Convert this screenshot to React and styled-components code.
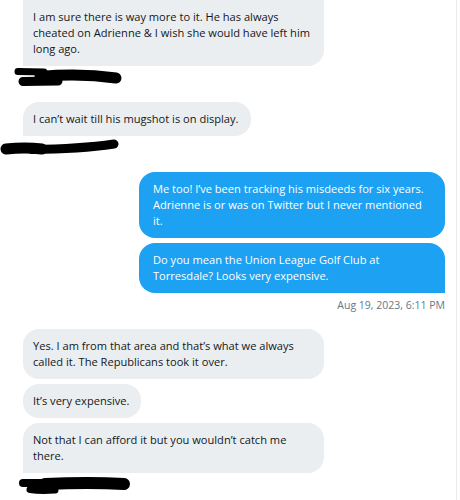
import React from 'react';
import styled, { createGlobalStyle } from 'styled-components';

const GlobalStyle = createGlobalStyle`
  html, body {
    margin: 0;
    padding: 0;
    background: #ffffff;
    overflow: hidden;
  }
`;

// Layout
const Thread = styled.div`
  width: 457px;
  height: 500px;
  box-sizing: border-box;
  border-right: 1px solid #e6ecf0;
  padding: 0 11px 0 23px;
  display: flex;
  flex-direction: column;
  gap: 16px;
  font-family: "Open Sans", "Noto Sans", sans-serif;
  font-size: 11.1px;
  line-height: 16px;
  overflow: hidden;
`;

const Group = styled.div`
  display: flex;
  flex-direction: column;
  align-items: ${({ $mine }) => ($mine ? 'flex-end' : 'flex-start')};
  gap: 5px;
`;

const Bubble = styled.div`
  box-sizing: border-box;
  width: ${({ $wide, $mine }) => ($wide ? ($mine ? '306px' : '301px') : 'auto')};
  padding: ${({ $mine }) => ($mine ? '9px 14px' : '9px 12px 9px 10px')};
  background: ${({ $mine }) => ($mine ? '#1da1f2' : '#eaeef1')};
  color: ${({ $mine }) => ($mine ? '#ffffff' : '#14171a')};
  border-radius: 16px;
  white-space: pre;
  ${({ $tail, $mine }) =>
    $tail && ($mine ? 'border-bottom-right-radius: 0;' : 'border-bottom-left-radius: 0;')}
  ${({ $cut }) => $cut && 'margin-top: -14px; padding-top: 23px;'}
`;

const Footer = styled.div`
  height: 16px;
  margin-top: -1px;
  display: flex;
  align-items: center;
  align-self: stretch;
  justify-content: ${({ $mine }) => ($mine ? 'flex-end' : 'flex-start')};
`;

const Stamp = styled.span`
  font-size: 10.5px;
  color: #657786;
`;

const Redaction = styled.svg`
  display: block;
  width: 160px;
  height: 18px;
  margin-left: -23px;
  overflow: visible;
`;

// Scribbles over the sender names
const scribbles = [
  (
    <g stroke="#000" strokeLinecap="round" fill="none">
      <path d="M18 2.5 L44 3" strokeWidth="7" />
      <path d="M23 12.5 L58 12" strokeWidth="9" />
      <path d="M40 7.5 Q80 4 116 9" strokeWidth="11" />
    </g>
  ),
  (
    <g stroke="#000" strokeLinecap="round" fill="none">
      <path d="M6 10 Q25 8 42 10" strokeWidth="11" />
      <path d="M32 10.5 Q80 10 114 5" strokeWidth="9" />
    </g>
  ),
  (
    <g stroke="#000" strokeLinecap="round" fill="none">
      <path d="M23 7 L45 7" strokeWidth="8" />
      <path d="M30 13.5 Q40 15 55 14" strokeWidth="7" />
      <path d="M45 8 Q90 6 124 8" strokeWidth="12" />
    </g>
  ),
];

const groups = [
  {
    mine: false,
    scribble: 0,
    messages: [
      'I am sure there is way more to it. He has always\ncheated on Adrienne & I wish she would have left him\nlong ago.',
    ],
  },
  {
    mine: false,
    scribble: 1,
    messages: ['I can’t wait till his mugshot is on display.'],
  },
  {
    mine: true,
    stamp: 'Aug 19, 2023, 6:11 PM',
    messages: [
      'Me too! I’ve been tracking his misdeeds for six years.\nAdrienne is or was on Twitter but I never mentioned\nit.',
      'Do you mean the Union League Golf Club at\nTorresdale? Looks very expensive.',
    ],
  },
  {
    mine: false,
    scribble: 2,
    messages: [
      'Yes. I am from that area and that’s what we always\ncalled it. The Republicans took it over.',
      'It’s very expensive.',
      'Not that I can afford it but you wouldn’t catch me\nthere.',
    ],
  },
];

function App() {
  return (
    <>
      <GlobalStyle />
      <Thread>
        {groups.map((group, gi) => (
          <Group key={gi} $mine={group.mine}>
            {group.messages.map((text, mi) => (
              <Bubble
                key={mi}
                $mine={group.mine}
                $wide={text.includes('\n')}
                $tail={mi === group.messages.length - 1}
                $cut={gi === 0 && mi === 0}
              >
                {text}
              </Bubble>
            ))}
            <Footer $mine={group.mine}>
              {group.mine ? (
                <Stamp>{group.stamp}</Stamp>
              ) : (
                <Redaction viewBox="0 0 160 18">{scribbles[group.scribble]}</Redaction>
              )}
            </Footer>
          </Group>
        ))}
      </Thread>
    </>
  );
}

export default App;
